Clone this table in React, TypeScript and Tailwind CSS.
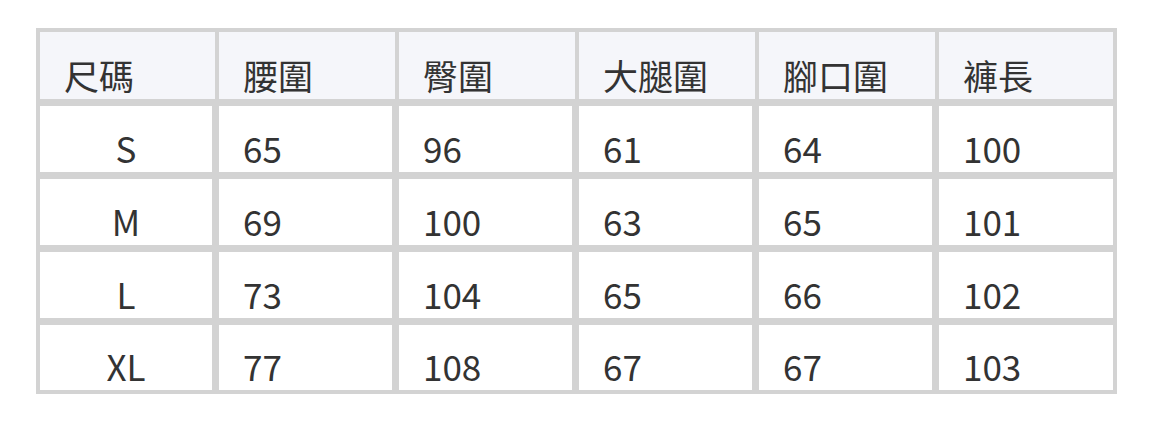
/**
 * Size chart table (褲子尺碼表)
 */

const headers = ["尺碼", "腰圍", "臀圍", "大腿圍", "腳口圍", "褲長"];

const rows = [
  ["S", "65", "96", "61", "64", "100"],
  ["M", "69", "100", "63", "65", "101"],
  ["L", "73", "104", "65", "66", "102"],
  ["XL", "77", "108", "67", "67", "103"],
];

const cols = "grid grid-cols-[175px_176px_176px_176px_176px_174px] gap-x-[4px]";

const App = () => {
  return (
    <div
      className="min-h-screen bg-white pl-[36px] pt-[28px] text-[#333]"
      style={{ fontFamily: '"Noto Sans CJK TC", "Noto Sans", sans-serif' }}
    >
      <div className="flex w-[1081px] flex-col gap-y-[7px] bg-[#d3d3d3] p-[4px]">
        {/* Header */}
        <div className={cols}>
          {headers.map((h) => (
            <div
              key={h}
              className="flex h-[67px] items-end bg-[#f5f6fa] pb-[7px] pl-[24px] text-[35px] leading-[35px]"
            >
              {h}
            </div>
          ))}
        </div>

        {/* Body */}
        {rows.map((row, ri) => (
          <div key={row[0]} className={cols}>
            {row.map((cell, ci) => (
              <div
                key={ci}
                className={
                  "flex items-end bg-white pb-[7px] text-[35px] leading-[35px] " +
                  (ri === rows.length - 1 ? "h-[65px] " : "h-[66px] ") +
                  (ci === 0 ? "justify-center border-r-[3px] border-[#d3d3d3]" : "pl-[24px] ") +
                  (ci > 0 && ci < 5 ? "border-r-[3px] border-[#d3d3d3]" : "")
                }
              >
                {cell}
              </div>
            ))}
          </div>
        ))}
      </div>
    </div>
  );
};

export default App;
